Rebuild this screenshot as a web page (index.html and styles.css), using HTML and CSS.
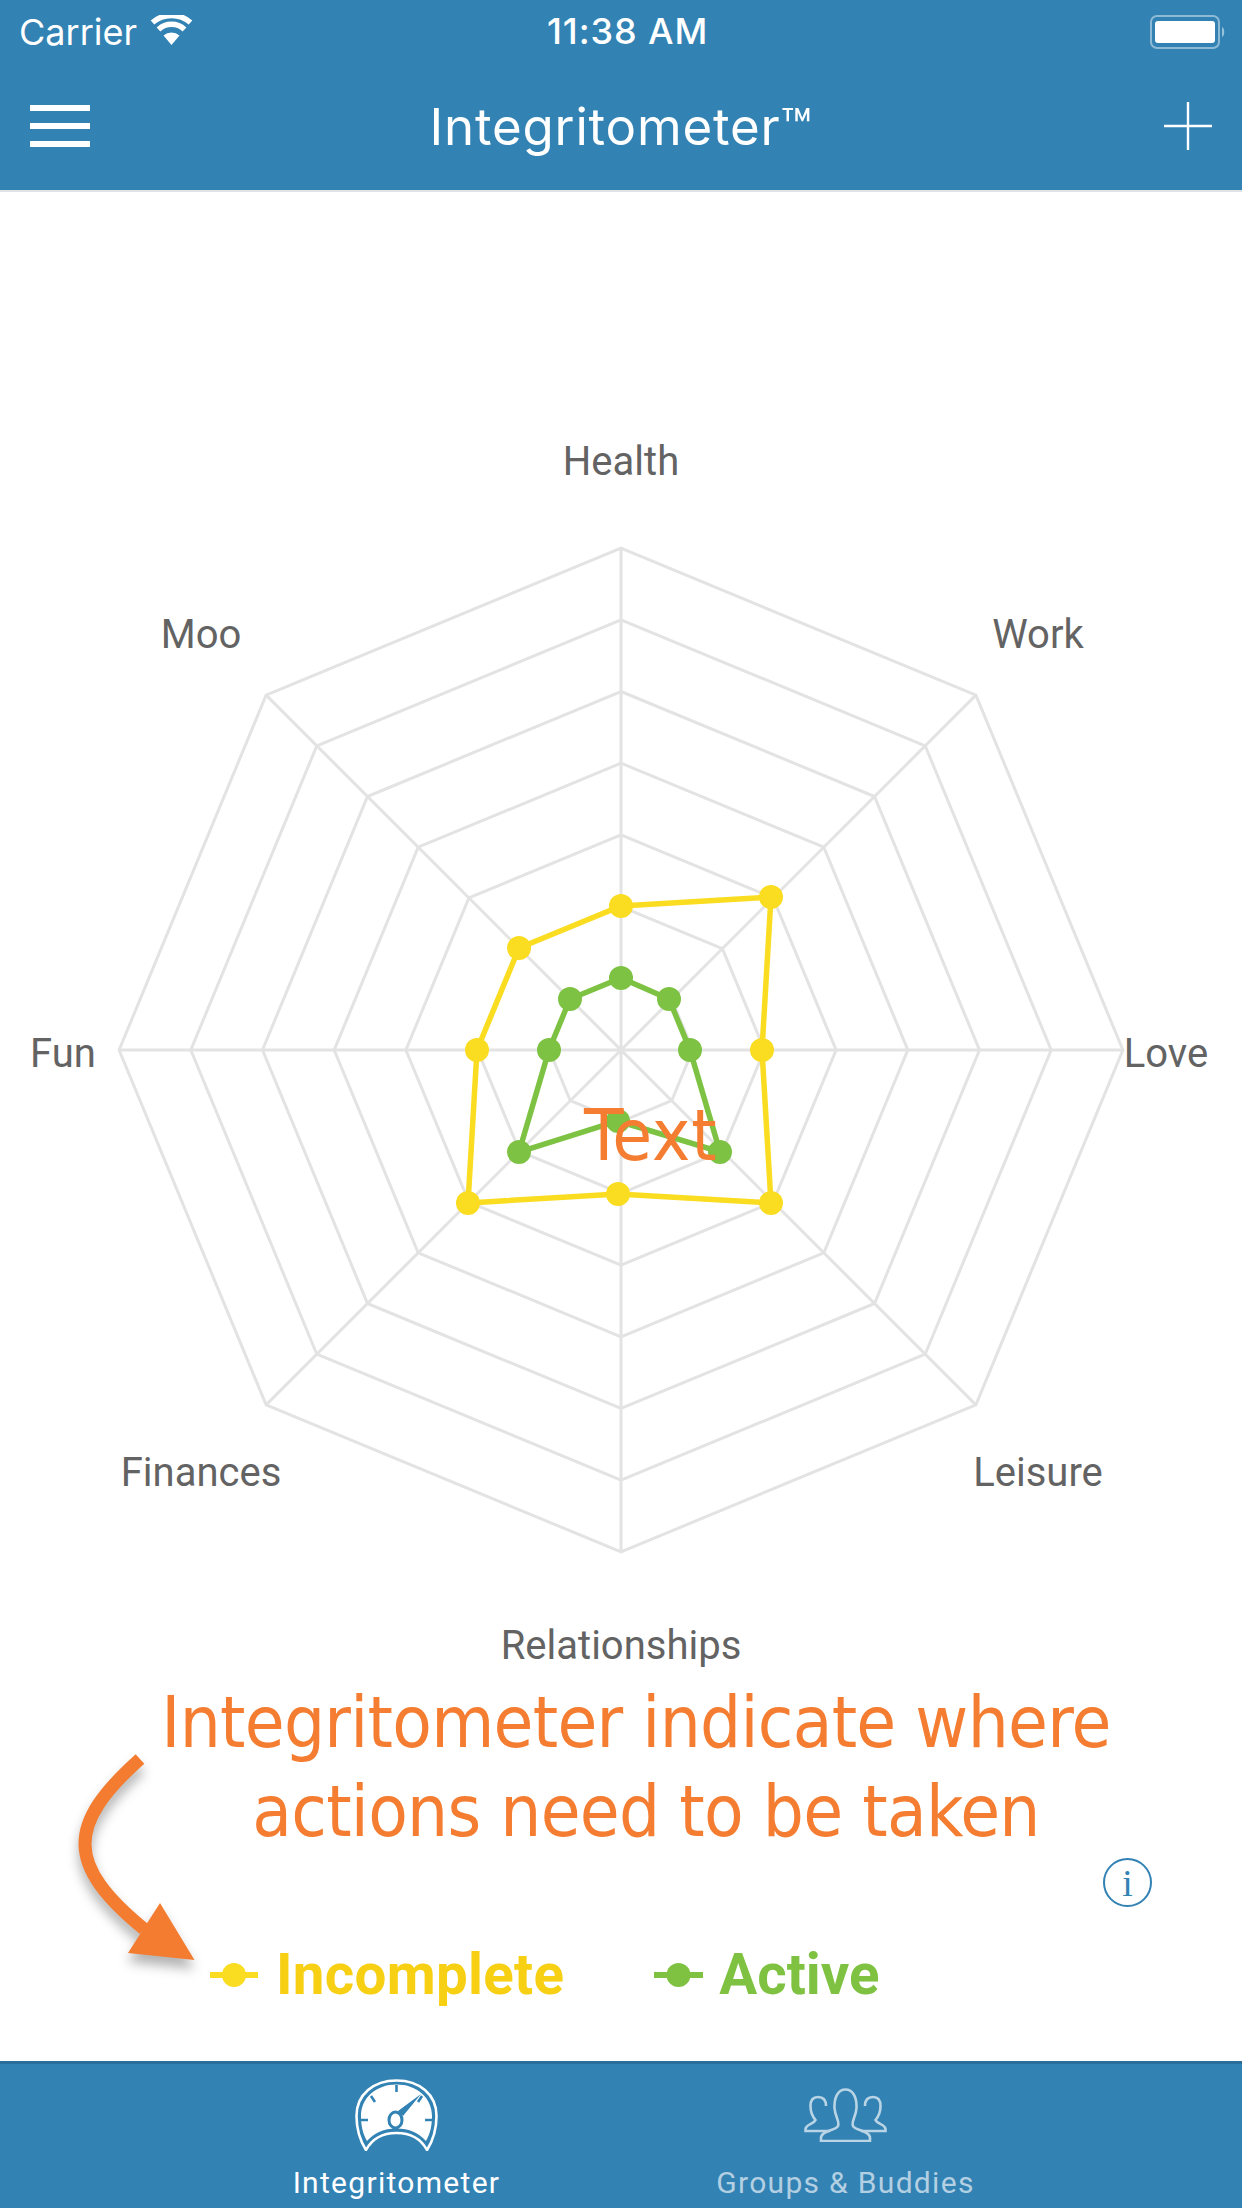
FILE: index.html
```html
<!DOCTYPE html>
<html lang="en">
<head>
<meta charset="utf-8">
<title>Integritometer</title>
<link rel="stylesheet" href="styles.css">
</head>
<body>
<div class="app">
  <header class="header">
    <div class="status">
      <div class="status-left">
        <span>Carrier</span>
        <svg class="wifi" viewBox="0 0 43 30" aria-hidden="true">
          <path d="M21.5 30 L13.5 20.5 A12 12 0 0 1 29.5 20.5 Z" fill="#fff"/>
          <path d="M8.5 14.5 A19 19 0 0 1 34.5 14.5" class="wifi-arc"/>
          <path d="M2.5 7.5 A29 29 0 0 1 40.5 7.5" class="wifi-arc"/>
        </svg>
      </div>
      <span class="status-time">11:38 AM</span>
      <svg class="battery" viewBox="0 0 76 34" aria-hidden="true">
        <rect x="1" y="1" width="68" height="32" rx="6" fill="none" stroke="#fff" stroke-opacity=".45" stroke-width="2"/>
        <rect x="5" y="6" width="60" height="22" rx="3" fill="#fff"/>
        <path d="M72 12 C75 13 75 21 72 22 Z" fill="#fff" fill-opacity=".5"/>
      </svg>
    </div>
    <nav class="nav">
      <div class="burger"><i></i><i></i><i></i></div>
      <h1 class="title">Integritometer™</h1>
      <svg class="plus" viewBox="0 0 48 48" aria-hidden="true">
        <path d="M24 0V48M0 24H48" stroke="#fff" stroke-width="2.4" fill="none"/>
      </svg>
    </nav>
  </header>

  <main class="main">
    <svg class="chart" viewBox="0 192 1242 1483">
      <g transform="translate(621 1050)" class="grid">
        <polygon points="0,-71.7 50.7,-50.7 71.7,0 50.7,50.7 0,71.7 -50.7,50.7 -71.7,0 -50.7,-50.7"/>
        <polygon points="0,-143.4 101.4,-101.4 143.4,0 101.4,101.4 0,143.4 -101.4,101.4 -143.4,0 -101.4,-101.4"/>
        <polygon points="0,-215.1 152.1,-152.1 215.1,0 152.1,152.1 0,215.1 -152.1,152.1 -215.1,0 -152.1,-152.1"/>
        <polygon points="0,-286.8 202.8,-202.8 286.8,0 202.8,202.8 0,286.8 -202.8,202.8 -286.8,0 -202.8,-202.8"/>
        <polygon points="0,-358.5 253.5,-253.5 358.5,0 253.5,253.5 0,358.5 -253.5,253.5 -358.5,0 -253.5,-253.5"/>
        <polygon points="0,-430.2 304.2,-304.2 430.2,0 304.2,304.2 0,430.2 -304.2,304.2 -430.2,0 -304.2,-304.2"/>
        <polygon points="0,-501.9 354.9,-354.9 501.9,0 354.9,354.9 0,501.9 -354.9,354.9 -501.9,0 -354.9,-354.9"/>
        <path d="M0,-501.9V501.9M-501.9,0H501.9M-354.9,-354.9L354.9,354.9M354.9,-354.9L-354.9,354.9"/>
      </g>

      <g class="series series-yellow">
        <polygon points="621,906 771,897 762,1050 771,1203 618,1194 468,1203 477,1050 519,948"/>
        <circle cx="621" cy="906" r="12"/><circle cx="771" cy="897" r="12"/><circle cx="762" cy="1050" r="12"/><circle cx="771" cy="1203" r="12"/><circle cx="618" cy="1194" r="12"/><circle cx="468" cy="1203" r="12"/><circle cx="477" cy="1050" r="12"/><circle cx="519" cy="948" r="12"/>
      </g>
      <g class="series series-green">
        <polygon points="621,978 669,999 690,1050 720,1152 618,1121 519,1152 549,1050 570,999"/>
        <circle cx="621" cy="978" r="12"/><circle cx="669" cy="999" r="12"/><circle cx="690" cy="1050" r="12"/><circle cx="720" cy="1152" r="12"/><circle cx="618" cy="1121" r="12"/><circle cx="519" cy="1152" r="12"/><circle cx="549" cy="1050" r="12"/><circle cx="570" cy="999" r="12"/>
      </g>

      <g class="labels">
        <text x="621" y="475">Health</text>
        <text x="201" y="648">Moo</text>
        <text x="1038" y="648">Work</text>
        <text x="63" y="1067">Fun</text>
        <text x="1166" y="1067">Love</text>
        <text x="201" y="1486">Finances</text>
        <text x="1038" y="1486">Leisure</text>
        <text x="621" y="1659">Relationships</text>
      </g>
      <text class="chart-text" x="584" y="1160">Text</text>
    </svg>

    <p class="caption"><span class="line-one">Integritometer indicate where</span><span class="line-two">actions need to be taken</span></p>

    <div class="legend">
      <div class="legend-item legend-yellow">
        <svg class="swatch" viewBox="0 0 48 24" aria-hidden="true"><rect y="9" width="48" height="6"/><circle cx="24" cy="12" r="12"/></svg>
        <span>Incomplete</span>
      </div>
      <div class="legend-item legend-green">
        <svg class="swatch" viewBox="0 0 49 24" aria-hidden="true"><rect y="9" width="49" height="6"/><circle cx="24.500" cy="12" r="12"/></svg>
        <span>Active</span>
      </div>
    </div>

    <svg class="arrow" viewBox="0 0 140 230" aria-hidden="true">
      <path d="M87 9 C13 75 13 115 91 179" fill="none" stroke="#f47c30" stroke-width="13"/>
      <polygon points="141.500,210 107,153 75,203" fill="#f47c30"/>
    </svg>

    <div class="info"><span>i</span></div>
  </main>

  <footer class="tabs">
    <div class="tab tab-active">
      <svg class="tab-icon gauge" viewBox="0 0 83 72" aria-hidden="true">
        <path d="M11 71 C4 60 1.500 48 1.500 37 C1.500 15 19 1.500 41.500 1.500 C64 1.500 81.500 15 81.500 37 C81.500 48 79 60 72 71 C66 60 55 54 41.500 54 C28 54 17 60 11 71 Z" fill="none" stroke="#fff" stroke-width="2.6"/>
        <path d="M12 62 C7.500 54 6 46 6 37 C6 19 21 5.500 41.500 5.500 C62 5.500 77 19 77 37 C77 46 75.500 54 71 62 C64 54 54 49.500 41.500 49.500 C29 49.500 19 54 12 62 Z" fill="#fff"/>
        <path d="M41.500 6V13M16 17L20 23M67 17L63 23M6 41H13M70 41H77" stroke="#3282b4" stroke-width="2.6" fill="none"/>
        <ellipse cx="40.500" cy="41" rx="6.500" ry="8" fill="none" stroke="#3282b4" stroke-width="3"/>
        <path d="M43 32 L66 15 L48 37 Z" fill="#3282b4"/>
      </svg>
      <span>Integritometer</span>
    </div>
    <div class="tab tab-muted">
      <svg class="tab-icon group" viewBox="0 0 83 54" aria-hidden="true">
        <g fill="none" stroke="#b9d4e5" stroke-width="2.6">
          <path d="M26 43 H1.500 V41 C2 36 10 36 11.500 32 C8 28 6.500 23 6.500 18 C6.500 12 9 9 14 9 C19 9 22 12 22 18"/>
          <path d="M57 43 H81.500 V41 C81 36 73 36 71.500 32 C75 28 76.500 23 76.500 18 C76.500 12 74 9 69 9 C64 9 61 12 61 18"/>
          <path d="M17 53 V50 C17 42 32 43 34 38 C36 33 31 29 30.500 20 C30 8 35 1.500 41.500 1.500 C48 1.500 53 8 52.500 20 C52 29 47 33 49 38 C51 43 66 42 66 50 V53 Z"/>
        </g>
      </svg>
      <span>Groups &amp; Buddies</span>
    </div>
  </footer>
</div>
</body>
</html>
```

FILE: styles.css
```css
* { box-sizing: border-box; }

html, body { margin: 0; padding: 0; background: #fff; }

.app {
  width: 1242px;
  height: 2208px;
  display: flex;
  flex-direction: column;
  overflow: hidden;
  font-family: Roboto, "Liberation Sans", sans-serif;
}

.header {
  height: 192px;
  background: #3282b4;
  border-bottom: 2px solid #dfe3e6;
  color: #fff;
  flex: none;
  font-family: Inter, "Liberation Sans", sans-serif;
}

.status {
  height: 60px;
  padding: 4px 16px 0 19px;
  display: flex;
  align-items: center;
  justify-content: space-between;
  font-size: 36px;
  position: relative;
}

.status-left { display: flex; align-items: center; gap: 13px; }

.wifi { width: 43px; height: 30px; margin-top: -4px; }
.wifi-arc { fill: none; stroke: #fff; stroke-width: 5.500; }

.status-time {
  position: absolute;
  left: 547px;
  top: 9px;
  font-weight: 500;
  letter-spacing: .9px;
}

.battery { width: 76px; height: 34px; }

.nav {
  height: 130px;
  padding: 2px 30px 0;
  display: flex;
  align-items: center;
  justify-content: space-between;
}

.burger { width: 60px; display: flex; flex-direction: column; gap: 12px; }
.burger i { display: block; height: 6px; background: #fff; }

.title {
  margin: 0 12px 0 0;
  font-size: 51px;
  font-weight: 400;
  letter-spacing: .8px;
  line-height: 1;
}

.plus { width: 48px; height: 48px; }

.main {
  flex: 1;
  position: relative;
  display: flex;
  flex-direction: column;
  align-items: center;
}

.chart { width: 1242px; height: 1483px; display: block; flex: none; }

.grid polygon, .grid path { fill: none; stroke: #e3e3e3; stroke-width: 3; }

.series polygon { fill: none; stroke-width: 5.500; }
.series-yellow polygon { stroke: #fadc20; }
.series-yellow circle { fill: #fadc20; }
.series-green polygon { stroke: #7dc242; }
.series-green circle { fill: #7dc242; }

.labels text {
  font-size: 40px;
  fill: #636363;
  text-anchor: middle;
}

.chart-text {
  font-family: "DejaVu Sans", sans-serif;
  font-stretch: condensed;
  font-size: 72px;
  letter-spacing: 1px;
  fill: #f47d31;
}

.caption {
  margin: 3px 0 0;
  font-family: "DejaVu Sans", sans-serif;
  font-stretch: condensed;
  font-size: 72px;
  line-height: 89px;
  letter-spacing: -0.7px;
  color: #f47d31;
  text-align: center;
  white-space: nowrap;
}

.line-one { display: block; padding-left: 30px; }
.line-two { display: block; padding-left: 50px; }

.legend {
  margin-top: 89px;
  align-self: flex-start;
  margin-left: 210px;
  display: flex;
  gap: 90px;
  font-size: 56.500px;
  font-weight: 700;
  line-height: 60px;
}

.legend-item { display: flex; align-items: center; }
.legend-yellow { color: #f7cf13; gap: 18px; letter-spacing: .3px; }
.legend-yellow .swatch { fill: #fadc20; width: 48px; }
.legend-green { color: #7fc241; gap: 16px; }
.legend-green .swatch { fill: #7fc241; width: 49px; }
.swatch { height: 24px; }

.arrow {
  position: absolute;
  left: 53px;
  top: 1558px;
  width: 140px;
  height: 230px;
  overflow: visible;
  filter: drop-shadow(0 9px 6px rgba(0, 0, 0, .3));
}

.info {
  position: absolute;
  left: 1103px;
  top: 1666px;
  width: 49px;
  height: 49px;
  border: 2.500px solid #3282b4;
  border-radius: 50%;
  display: flex;
  align-items: center;
  justify-content: center;
  font-family: "Liberation Serif", serif;
  font-size: 38px;
  color: #3282b4;
}

.tabs {
  height: 147px;
  flex: none;
  background: #3282b4;
  border-top: 3px solid #2a6f9b;
  display: flex;
  justify-content: center;
  gap: 189px;
  font-size: 30px;
  letter-spacing: 1.3px;
}

.tab {
  position: relative;
  width: 260px;
  display: flex;
  flex-direction: column;
  align-items: center;
  white-space: nowrap;
}

.tab-active { color: #fff; padding-top: 15px; }
.tab-muted { color: #b3cfe2; padding-top: 24px; }

.tab-icon { display: block; }
.gauge { width: 83px; height: 72px; margin-bottom: 14px; }
.group { width: 83px; height: 54px; margin-bottom: 23px; }
```
